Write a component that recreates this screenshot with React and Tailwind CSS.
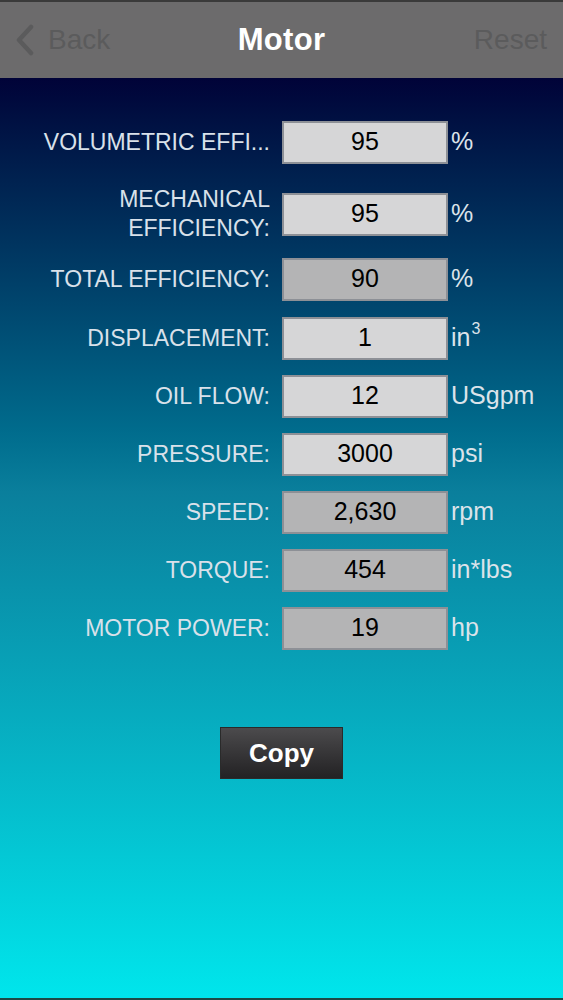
import React from 'react';

const rows = [
    { label: ['VOLUMETRIC EFFI...'], value: '95', unit: '%', computed: false, mt: 'mt-[43px]' },
    { label: ['MECHANICAL', 'EFFICIENCY:'], value: '95', unit: '%', computed: false, mt: 'mt-[22px]' },
    { label: ['TOTAL EFFICIENCY:'], value: '90', unit: '%', computed: true, mt: 'mt-[15px]' },
    { label: ['DISPLACEMENT:'], value: '1', unit: 'in3', computed: false, mt: 'mt-[17px]' },
    { label: ['OIL FLOW:'], value: '12', unit: 'USgpm', computed: false, mt: 'mt-[16px]' },
    { label: ['PRESSURE:'], value: '3000', unit: 'psi', computed: false, mt: 'mt-[16px]' },
    { label: ['SPEED:'], value: '2,630', unit: 'rpm', computed: true, mt: 'mt-[16px]' },
    { label: ['TORQUE:'], value: '454', unit: 'in*lbs', computed: true, mt: 'mt-[16px]' },
    { label: ['MOTOR POWER:'], value: '19', unit: 'hp', computed: true, mt: 'mt-[16px]' },
];

const Row = ({ row }) => {
    const tall = row.label.length > 1;
    return (
        <div className={`flex items-center ${row.mt} ${tall ? 'h-[58px]' : 'h-[42px]'}`}>
            <div className="w-[270px] text-right text-[23px] leading-[29px] text-[#d9e1ea]">
                {row.label.map(l => <div key={l}>{l}</div>)}
            </div>
            <div className={`ml-[12px] w-[166px] h-[43px] flex items-center justify-center border-2 border-[#8d9096] text-[25px] text-black ${row.computed ? 'bg-[#b4b4b5]' : 'bg-[#d6d6d7]'}`}>
                {row.value}
            </div>
            <div className="ml-[3px] text-[25px] leading-none text-[#dbe3ea] -mt-[2px] flex items-start">
                {row.unit === 'in3'
                    ? <><span>in</span><span className="text-[16px] leading-none ml-[1px] -mt-[4px]">3</span></>
                    : row.unit}
            </div>
        </div>
    );
};

const App = () => {
    return (
        <div className="w-[563px] h-[1000px] flex flex-col bg-[#222] overflow-hidden" style={{ fontFamily: '"Liberation Sans", Arial, sans-serif' }}>
            <div className="h-[2px] bg-[#3a3a3a]"></div>
            <div className="h-[76px] bg-[#6c6b6c] relative flex items-center justify-center">
                <div className="absolute left-[14px] top-0 h-full flex items-center text-[#5b5b5c] text-[28px]">
                    <svg width="24" height="32" viewBox="0 0 24 32" className="mr-[10px]">
                        <path d="M17 3 L5 16 L17 29" fill="none" stroke="#5b5b5c" strokeWidth="4.5" strokeLinecap="round" strokeLinejoin="round" />
                    </svg>
                    <span>Back</span>
                </div>
                <span className="text-white text-[31px] font-semibold tracking-[0.3px]">Motor</span>
                <span className="absolute right-[16px] text-[#5b5b5c] text-[28px]">Reset</span>
            </div>
            <div className="flex-1 flex flex-col bg-gradient-to-b from-[#010338] via-[#0a7f9c] via-45% to-[#00e6ec]">
                {rows.map((row, i) => <Row key={i} row={row} />)}
                <div className="flex justify-center mt-[78px]">
                    <button className="w-[123px] h-[52px] bg-gradient-to-b from-[#4c4b4d] to-[#232224] border border-[#2a2a2a] text-white text-[26px] font-bold">
                        Copy
                    </button>
                </div>
            </div>
            <div className="h-[2px] bg-[#1d4a45]"></div>
        </div>
    );
};

export default App;
